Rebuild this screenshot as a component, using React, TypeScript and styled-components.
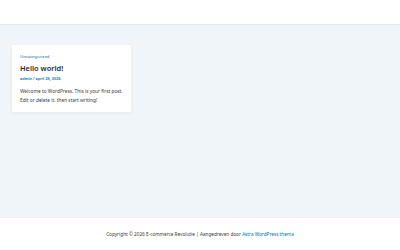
import React from "react";
import styled, { createGlobalStyle } from "styled-components";

const GlobalStyle = createGlobalStyle`
    html, body, #root {
        margin: 0;
        height: 100%;
    }
    body {
        font-family: "Noto Sans", "Open Sans", sans-serif;
        color: #3a3a3a;
    }
`;

const Page = styled.div`
    display: flex;
    flex-direction: column;
    height: 100%;
`;

const Header = styled.header`
    height: 24px;
    background: #fff;
    border-bottom: 1px solid #e4e8ec;
`;

const Main = styled.main`
    flex: 1;
    background: #f0f5fa;
    padding: 20px 12px;
`;

const Card = styled.article`
    width: 103px;
    background: #fff;
    padding: 8px 8px 7px;
    border-radius: 1px;
    box-shadow: 0 1px 4px rgba(0, 0, 0, 0.06);
`;

const Category = styled.a`
    display: block;
    color: #0170b9;
    font-size: 4.3px;
    line-height: 7px;
    text-decoration: none;
`;

const Title = styled.h2`
    margin: 3px 0 0;
    font-size: 7.4px;
    font-weight: 600;
    line-height: 10px;
    color: #2b2b2b;
`;

const Meta = styled.div`
    margin-top: 3px;
    font-size: 3.9px;
    font-weight: 600;
    line-height: 6px;
    color: #0170b9;
`;

const Excerpt = styled.p`
    margin: 4.5px 0 0;
    font-size: 4.8px;
    line-height: 9px;
`;

const Footer = styled.footer`
    height: 32px;
    display: flex;
    align-items: center;
    justify-content: center;
    background: #fff;
    border-top: 1px solid #eef0f3;
    font-size: 4.7px;
    color: #3a3a3a;
`;

const Link = styled.a`
    color: #0170b9;
    text-decoration: none;
`;

const App: React.FC = () => {
    return (<>
        <GlobalStyle/>
        <Page>
            <Header/>
            <Main>
                <Card>
                    <Category>Uncategorized</Category>
                    <Title>Hello world!</Title>
                    <Meta>admin / april 26, 2026</Meta>
                    <Excerpt>
                        Welcome to WordPress. This is your first post.<br/>
                        Edit or delete it, then start writing!
                    </Excerpt>
                </Card>
            </Main>
            <Footer>
                <span>Copyright © 2026 E-commerce Revolutie | Aangedreven door <Link>Astra WordPress thema</Link></span>
            </Footer>
        </Page>
    </>)
}

export default App;
